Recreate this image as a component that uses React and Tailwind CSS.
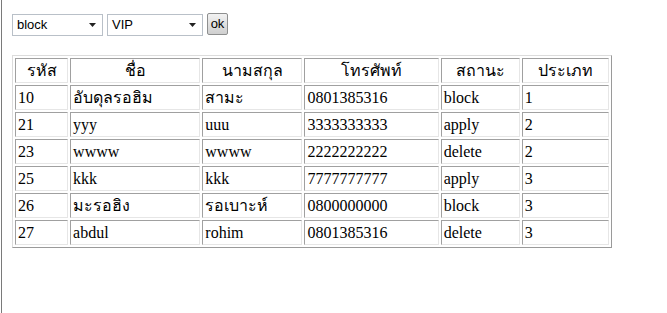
import React from "react";

const rows = [
  ["10", "อับดุลรอฮิม", "สามะ", "0801385316", "block", "1"],
  ["21", "yyy", "uuu", "3333333333", "apply", "2"],
  ["23", "wwww", "wwww", "2222222222", "delete", "2"],
  ["25", "kkk", "kkk", "7777777777", "apply", "3"],
  ["26", "มะรอฮิง", "รอเบาะห์", "0800000000", "block", "3"],
  ["27", "abdul", "rohim", "0801385316", "delete", "3"],
];

const heads = ["รหัส", "ชื่อ", "นามสกุล", "โทรศัพท์", "สถานะ", "ประเภท"];
const widths = ["w-[53px]", "w-[130px]", "w-[100px]", "w-[134px]", "w-[79px]", "w-[87px]"];

function Select({ label, w }) {
  return (
    <div className={`${w} h-[22px] flex items-center justify-between border border-[#b9c0c8] bg-white pl-[4px] pr-[6px] text-[13px] text-black`} style={{ fontFamily: '"Liberation Sans", Arial, sans-serif' }}>
      <span>{label}</span>
      <svg width="7" height="4" viewBox="0 0 7 4"><path d="M0 0H7L3.5 4Z" fill="#222" /></svg>
    </div>
  );
}

export default function App() {
  return (
    <div className="min-h-[313px] w-[667px] bg-white flex">
      <div className="w-[1px] bg-white" />
      <div className="w-[1px] bg-[#7a7a7a]" />
      <div className="flex flex-col pl-[10px] pt-[14px]">
        <div className="flex items-start gap-[4px]">
          <Select label="block" w="w-[91px]" />
          <Select label="VIP" w="w-[96px]" />
          <div className="-mt-[1px] h-[22px] w-[21px] flex items-center justify-center rounded-[2px] border border-[#8e8f8f] bg-gradient-to-b from-[#f2f2f2] to-[#cfcfcf] text-[13px] text-black" style={{ fontFamily: '"Liberation Sans", Arial, sans-serif' }}>ok</div>
        </div>
        <table
          className="mt-[19px] border-separate border-[1px] border-t-[#dcdcdc] border-l-[#dcdcdc] border-b-[#9a9a9a] border-r-[#9a9a9a] text-[16px] text-black w-[600px]"
          style={{ borderSpacing: "2px", fontFamily: '"Liberation Serif", "Times New Roman", "DejaVu Sans", serif' }}
        >
          <thead>
            <tr>
              {heads.map((h, i) => (
                <th key={i} className={`${widths[i]} h-[25px] p-0 font-normal text-center leading-none border border-t-[#a0a0a0] border-l-[#a0a0a0] border-b-[#e6e6e6] border-r-[#e6e6e6]`}>{h}</th>
              ))}
            </tr>
          </thead>
          <tbody>
            {rows.map((r, ri) => (
              <tr key={ri}>
                {r.map((c, ci) => (
                  <td key={ci} className={`${widths[ci]} h-[25px] py-0 pl-[2px] pr-0 text-left leading-none border border-t-[#a0a0a0] border-l-[#a0a0a0] border-b-[#e6e6e6] border-r-[#e6e6e6]`}>{c}</td>
                ))}
              </tr>
            ))}
          </tbody>
        </table>
      </div>
    </div>
  );
}
